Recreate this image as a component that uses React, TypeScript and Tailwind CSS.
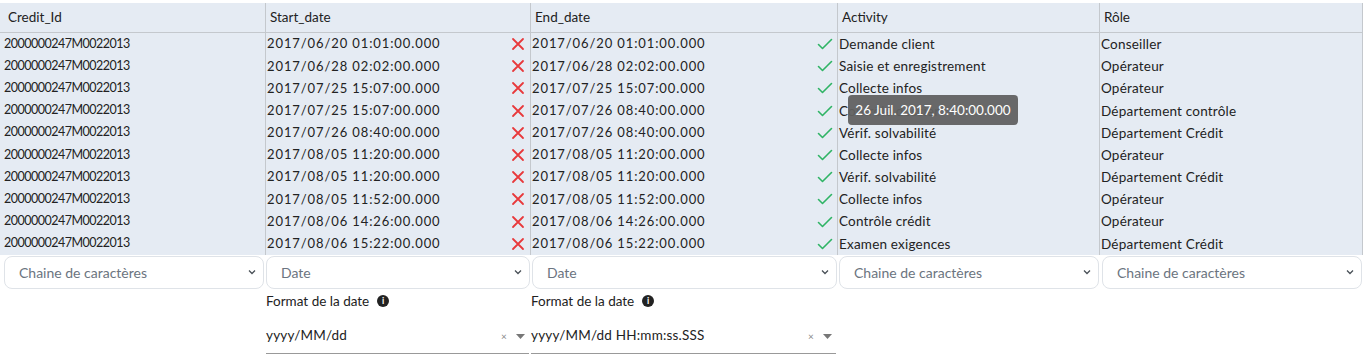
import * as React from "react";

type Row = {
  id: string;
  start: string;
  end: string;
  activity: string;
  role: string;
};

const rows: Row[] = [
  { id: "2000000247M0022013", start: "2017/06/20 01:01:00.000", end: "2017/06/20 01:01:00.000", activity: "Demande client", role: "Conseiller" },
  { id: "2000000247M0022013", start: "2017/06/28 02:02:00.000", end: "2017/06/28 02:02:00.000", activity: "Saisie et enregistrement", role: "Opérateur" },
  { id: "2000000247M0022013", start: "2017/07/25 15:07:00.000", end: "2017/07/25 15:07:00.000", activity: "Collecte infos", role: "Opérateur" },
  { id: "2000000247M0022013", start: "2017/07/25 15:07:00.000", end: "2017/07/26 08:40:00.000", activity: "Contrôle dossier", role: "Département contrôle" },
  { id: "2000000247M0022013", start: "2017/07/26 08:40:00.000", end: "2017/07/26 08:40:00.000", activity: "Vérif. solvabilité", role: "Département Crédit" },
  { id: "2000000247M0022013", start: "2017/08/05 11:20:00.000", end: "2017/08/05 11:20:00.000", activity: "Collecte infos", role: "Opérateur" },
  { id: "2000000247M0022013", start: "2017/08/05 11:20:00.000", end: "2017/08/05 11:20:00.000", activity: "Vérif. solvabilité", role: "Département Crédit" },
  { id: "2000000247M0022013", start: "2017/08/05 11:52:00.000", end: "2017/08/05 11:52:00.000", activity: "Collecte infos", role: "Opérateur" },
  { id: "2000000247M0022013", start: "2017/08/06 14:26:00.000", end: "2017/08/06 14:26:00.000", activity: "Contrôle crédit", role: "Opérateur" },
  { id: "2000000247M0022013", start: "2017/08/06 15:22:00.000", end: "2017/08/06 15:22:00.000", activity: "Examen exigences", role: "Département Crédit" },
];

const font = { fontFamily: "Lato, 'Noto Sans', sans-serif" };

function Cross() {
  return (
    <svg width="14" height="14" viewBox="0 0 14 14" className="shrink-0">
      <path d="M2 2 L12 12 M12 2 L2 12" stroke="#e8393c" strokeWidth="1.8" strokeLinecap="round" />
    </svg>
  );
}

function Check() {
  return (
    <svg width="16" height="14" viewBox="0 0 16 14" className="shrink-0">
      <path d="M1.5 7.5 L5.5 11.5 L14.5 2.5" fill="none" stroke="#2fb465" strokeWidth="1.6" strokeLinecap="round" strokeLinejoin="round" />
    </svg>
  );
}

function Chevron() {
  return (
    <svg width="8" height="6" viewBox="0 0 8 6">
      <path d="M1 1.5 L4 4.5 L7 1.5" fill="none" stroke="#495057" strokeWidth="1.3" />
    </svg>
  );
}

function SelectBox({ label, className }: { label: string; className: string }) {
  return (
    <div
      className={`flex h-[33px] items-center justify-between rounded-[8px] border border-[#dfe3e8] bg-white pl-[14px] pr-[7px] text-[14px] text-[#6b7480] ${className}`}
    >
      <span>{label}</span>
      <Chevron />
    </div>
  );
}

function InfoIcon() {
  return (
    <span className="ml-[8px] inline-flex h-[12px] w-[12px] items-center justify-center rounded-full bg-[#222] text-[9px] font-bold leading-none text-white">
      i
    </span>
  );
}

function DateFormat({ value, className }: { value: string; className: string }) {
  return (
    <div className={className}>
      <div className="flex h-[22px] items-center text-[13.5px] text-[#222]">
        Format de la date
        <InfoIcon />
      </div>
      <div className="mt-[8px] flex h-[34px] items-center justify-between border-b border-[#999] text-[13.5px] tracking-[0.2px] text-[#222]">
        <span className="-mt-[2px]">{value}</span>
        <span className="flex items-center gap-[9px] pr-[4px] text-[#888]">
          <span className="text-[10px]">×</span>
          <svg width="9" height="5" viewBox="0 0 9 5">
            <path d="M0 0 L9 0 L4.5 5 Z" fill="#777" />
          </svg>
        </span>
      </div>
    </div>
  );
}

export default function App() {
  return (
    <div className="relative h-[362px] w-[1367px] bg-white pt-[3px]" style={font}>
      <div className="w-[1363px] bg-[#e5ebf3] text-[#222]">
        <div className="flex h-[30px] border-b border-[#c4c8cd] text-[13.5px] text-[#222]">
          <div className="flex w-[265px] items-center pl-[8px]">Credit_Id</div>
          <div className="flex w-[265px] items-center border-l border-[#c4c8cd] pl-[4px]">Start_date</div>
          <div className="flex w-[307px] items-center border-l border-[#c4c8cd] pl-[4px]">End_date</div>
          <div className="flex w-[262px] items-center border-l border-[#c4c8cd] pl-[4px]">Activity</div>
          <div className="flex w-[264px] items-center border-x border-[#c4c8cd] pl-[4px]">Rôle</div>
        </div>
        {rows.map((r, i) => (
          <div key={i} className="flex h-[22.2px] text-[13px]">
            <div className="flex w-[265px] items-center pl-[4px] text-[12.5px] tracking-[-0.5px]">{r.id}</div>
            <div className="flex w-[265px] items-center justify-between border-l border-[#c4c8cd] pl-[1px] pr-[5px] text-[13px] tracking-[0.9px]">
              <span>{r.start}</span>
              <Cross />
            </div>
            <div className="flex w-[307px] items-center justify-between border-l border-[#c4c8cd] pl-[1px] pr-[4px] text-[13px] tracking-[0.9px]">
              <span>{r.end}</span>
              <Check />
            </div>
            <div className="flex w-[262px] items-center border-l border-[#c4c8cd] pl-[1px] text-[13.5px] tracking-[0.2px]">{r.activity}</div>
            <div className="flex w-[264px] items-center border-x border-[#c4c8cd] pl-[1px] text-[13.5px] tracking-[0.2px]">{r.role}</div>
          </div>
        ))}
      </div>
      <div className="mt-[1px] flex">
        <SelectBox label="Chaine de caractères" className="ml-[4px] w-[260px]" />
        <SelectBox label="Date" className="ml-[2px] w-[264px]" />
        <SelectBox label="Date" className="ml-[2px] w-[305px]" />
        <SelectBox label="Chaine de caractères" className="ml-[2px] w-[260px]" />
        <SelectBox label="Chaine de caractères" className="ml-[3px] w-[260px]" />
      </div>
      <div className="mt-[1px] flex pl-[266px]">
        <DateFormat value="yyyy/MM/dd" className="w-[263px]" />
        <DateFormat value="yyyy/MM/dd HH:mm:ss.SSS" className="ml-[2px] w-[305px]" />
      </div>
      <div className="absolute left-[848px] top-[95px] flex h-[30px] w-[170px] items-center justify-center rounded-[4px] bg-[#616161]/95 text-[13.5px] text-white">
        26 Juil. 2017, 8:40:00.000
      </div>
    </div>
  );
}
